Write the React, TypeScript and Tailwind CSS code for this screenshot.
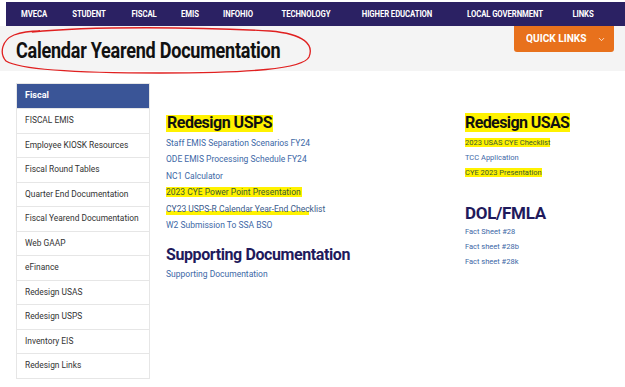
import { ChevronDown } from "lucide-react"

const nav = [
  ["MVECA", 34],
  ["STUDENT", 89],
  ["FISCAL", 144],
  ["EMIS", 190],
  ["INFOHIO", 238],
  ["TECHNOLOGY", 306],
  ["HIGHER EDUCATION", 397],
  ["LOCAL GOVERNMENT", 505],
  ["LINKS", 583],
] as const

const side = [
  "FISCAL EMIS",
  "Employee KIOSK Resources",
  "Fiscal Round Tables",
  "Quarter End Documentation",
  "Fiscal Yearend Documentation",
  "Web GAAP",
  "eFinance",
  "Redesign USAS",
  "Redesign USPS",
  "Inventory EIS",
  "Redesign Links",
]

const hl = "bg-[#fff200]"

export default function App() {
  return (
    <div className="relative w-[625px] h-[387px] overflow-hidden bg-white font-['Roboto',sans-serif]">
      {/* top nav */}
      <div className="pt-[2px] pl-[6px]">
        <div className="relative h-[24px] bg-[#2b2163]">
          {nav.map(([label, x]) => (
            <span
              key={label}
              className="absolute top-0 leading-[24px] -translate-x-1/2 text-[9px] font-bold text-white tracking-[-0.1px] scale-x-[0.86] whitespace-nowrap"
              style={{ left: x - 6 }}
            >
              {label}
            </span>
          ))}
        </div>
      </div>

      {/* title band */}
      <div className="relative h-[45px] bg-[#f4f4f4] pl-[16px] pt-[3px] flex items-center">
        <h1 className="text-[22px] font-bold text-[#111] tracking-[-0.3px] origin-left scale-x-[0.82] whitespace-nowrap">
          Calendar Yearend Documentation
        </h1>
        <div className="absolute right-[11px] top-0 w-[100px] h-[26px] bg-[#e8711c] rounded-b-[3px] flex items-center justify-center gap-[6px] text-white">
          <span className="text-[11.5px] font-bold whitespace-nowrap scale-x-[0.88]">QUICK LINKS</span>
          <ChevronDown size={9} strokeWidth={2} />
        </div>
      </div>

      {/* red hand-drawn ellipse */}
      <svg className="absolute left-0 top-0" width="625" height="387" viewBox="0 0 625 387" fill="none">
        <path
          d="M32 32 C 90 26, 200 27, 270 31 C 305 34, 314 45, 309 57 C 303 69, 250 73, 160 73 C 80 73, 20 70, 6 61 C -1 53, 2 40, 14 35 C 22 32, 30 31, 40 31"
          stroke="#e02020"
          strokeWidth="1.3"
        />
      </svg>

      {/* body */}
      <div className="flex pt-[12px] pl-[16px]">
        <div className="w-[134px] shrink-0 border border-[#e6e6e6]">
          <div className="h-[24px] bg-[#3a5597] pl-[8px] flex items-center text-[9px] font-bold text-white">
            Fiscal
          </div>
          {side.map((s) => (
            <div
              key={s}
              className="h-[24.5px] pl-[8px] flex items-center border-t border-[#e6e6e6] text-[8.4px] text-[#333] whitespace-nowrap"
            >
              {s}
            </div>
          ))}
        </div>

        <div className="w-[315px] shrink-0 pl-[16px] pt-[28px]">
          <h2 className="inline-block text-[16px] leading-[20px] font-bold text-[#111] tracking-[-0.5px] px-[1px] bg-[linear-gradient(transparent_10%,#fff200_10%,#fff200_95%,transparent_95%)]">
            Redesign USPS
          </h2>
          <div className="flex flex-col mt-[0px] text-[8.5px] leading-[16.4px] text-[#3d68a6]">
            <span>Staff EMIS Separation Scenarios FY24</span>
            <span>ODE EMIS Processing Schedule FY24</span>
            <span>NC1 Calculator</span>
            <span>
              <span className={`${hl} text-[#3a5a30] pr-[1px]`}>2023 CYE Power Point Presentation</span>
            </span>
            <span className="relative">
              <span className="absolute left-0 top-[10px] w-[143px] h-[4px] bg-[#fff200]" />
              <span className="relative text-[#3a5a8a]">CY23 USPS-R Calendar Year-End Checklist</span>
            </span>
            <span>W2 Submission To SSA BSO</span>
          </div>
          <h2 className="mt-[12px] text-[16px] leading-[20px] font-bold text-[#1f1a5c] tracking-[-0.4px]">
            Supporting Documentation
          </h2>
          <div className="mt-[1px] text-[8.5px] leading-[16px] text-[#3d68a6]">Supporting Documentation</div>
        </div>

        <div className="pt-[28px]">
          <h2 className="inline-block text-[16px] leading-[19px] font-bold text-[#111] tracking-[-0.6px] pr-[1px] bg-[#fff200]">
            Redesign USAS
          </h2>
          <div className="flex flex-col mt-[0px] text-[7.5px] leading-[15px] text-[#3d68a6]">
            <span>
              <span className={`${hl} text-[#3a5a30]`}>2023 USAS CYE Checklist</span>
            </span>
            <span>TCC Application</span>
            <span>
              <span className={`${hl} text-[#3a5a30]`}>CYE 2023 Presentation</span>
            </span>
          </div>
          <h2 className="mt-[23px] text-[17px] leading-[20px] font-bold text-[#1f1a5c] tracking-[-0.3px]">DOL/FMLA</h2>
          <div className="flex flex-col mt-[1px] text-[7.5px] leading-[15px] text-[#3d68a6]">
            <span>Fact Sheet #28</span>
            <span>Fact sheet #28b</span>
            <span>Fact sheet #28k</span>
          </div>
        </div>
      </div>
    </div>
  )
}
